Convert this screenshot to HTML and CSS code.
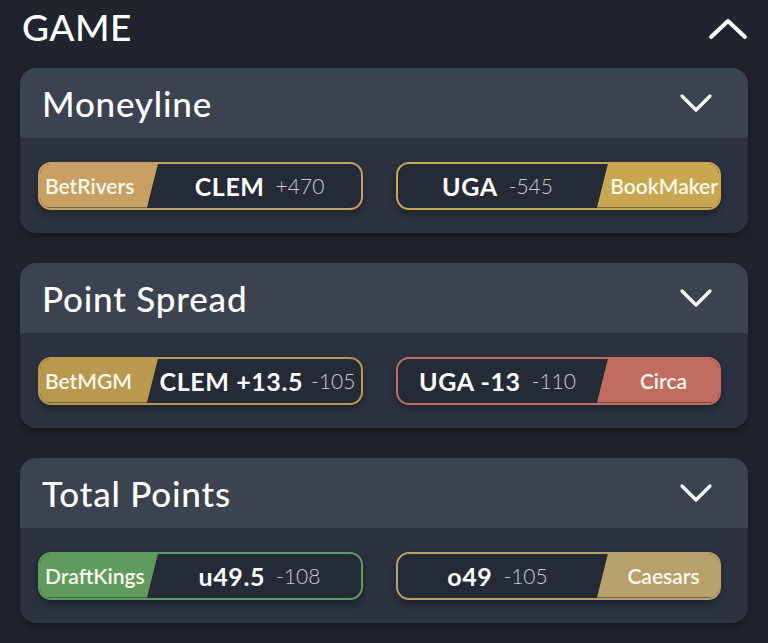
FILE: index.html
```html
<!DOCTYPE html>
<html lang="en">
<head>
    <meta charset="UTF-8">
    <meta name="viewport" content="width=device-width, initial-scale=1.0">
    <title>Game Odds</title>

    <link rel="stylesheet" href="styles.css">
</head>
<body>

    <div class="section-head">
        <h1>GAME</h1>
        <svg class="chevron-up" width="40" height="22" viewBox="0 0 40 22">
            <path d="M3 19 L20 3 L37 19" fill="none" stroke="#fff" stroke-width="4" stroke-linecap="round" stroke-linejoin="round"/>
        </svg>
    </div>

    <div class="market">
        <div class="market-head">
            <h2>Moneyline</h2>
            <svg class="chevron" width="34" height="20" viewBox="0 0 34 20">
                <path d="M3 3 L17 17 L31 3" fill="none" stroke="#fff" stroke-width="3.2" stroke-linecap="round" stroke-linejoin="round"/>
            </svg>
        </div>
        <div class="market-body">
            <div class="pill left betrivers">
                <span class="book">BetRivers</span>
                <span class="line"><b>CLEM</b> <span class="odds">+470</span></span>
            </div>
            <div class="pill right bookmaker">
                <span class="line"><b>UGA</b> <span class="odds">-545</span></span>
                <span class="book">BookMaker</span>
            </div>
        </div>
    </div>

    <div class="market">
        <div class="market-head">
            <h2>Point Spread</h2>
            <svg class="chevron" width="34" height="20" viewBox="0 0 34 20">
                <path d="M3 3 L17 17 L31 3" fill="none" stroke="#fff" stroke-width="3.2" stroke-linecap="round" stroke-linejoin="round"/>
            </svg>
        </div>
        <div class="market-body">
            <div class="pill left betmgm">
                <span class="book">BetMGM</span>
                <span class="line tight"><b>CLEM +13.5</b> <span class="odds">-105</span></span>
            </div>
            <div class="pill right circa">
                <span class="line"><b>UGA -13</b> <span class="odds">-110</span></span>
                <span class="book">Circa</span>
            </div>
        </div>
    </div>

    <div class="market">
        <div class="market-head">
            <h2>Total Points</h2>
            <svg class="chevron" width="34" height="20" viewBox="0 0 34 20">
                <path d="M3 3 L17 17 L31 3" fill="none" stroke="#fff" stroke-width="3.2" stroke-linecap="round" stroke-linejoin="round"/>
            </svg>
        </div>
        <div class="market-body">
            <div class="pill left draftkings">
                <span class="book">DraftKings</span>
                <span class="line"><b>u49.5</b> <span class="odds">-108</span></span>
            </div>
            <div class="pill right caesars">
                <span class="line"><b>o49</b> <span class="odds">-105</span></span>
                <span class="book">Caesars</span>
            </div>
        </div>
    </div>

</body>
</html>
```

FILE: styles.css
```css
body {
    font-family: Lato, "Open Sans", sans-serif;
    background-color: #21242e;
    color: #fff;
    margin: 0;
    padding: 0 20px;
}

.section-head {
    display: flex;
    align-items: center;
    justify-content: space-between;
    height: 52px;
    margin-bottom: 16px;
    padding-left: 2px;
}

.section-head h1 {
    margin: 0;
    font-size: 37px;
    font-weight: 500;
    letter-spacing: 0.5px;
}

.chevron-up {
    margin-top: 6px;
}

.market {
    border-radius: 16px;
    overflow: hidden;
    margin-bottom: 30px;
    box-shadow: 0 4px 10px rgba(0, 0, 0, 0.35);
}

.market-head {
    background-color: #3b4250;
    height: 70px;
    display: flex;
    align-items: center;
    justify-content: space-between;
    padding: 0 35px 0 22px;
}

.market-head h2 {
    margin: 0;
    font-size: 35px;
    font-weight: 500;
    letter-spacing: 0.8px;
}

.market-body {
    background-color: #2c3240;
    height: 95px;
    display: grid;
    grid-template-columns: 325px 325px;
    column-gap: 33px;
    align-items: center;
    padding: 0 0 0 18px;
}

.pill {
    height: 48px;
    box-sizing: border-box;
    border: 2px solid;
    border-radius: 13px;
    overflow: hidden;
    display: flex;
    background-color: #252a37;
    box-shadow: 0 4px 8px rgba(0, 0, 0, 0.35);
}

.book {
    width: 118px;
    flex: none;
    display: flex;
    align-items: center;
    font-size: 21px;
    font-weight: 600;
    color: #fdf8ee;
    box-sizing: border-box;
}

.left .book {
    clip-path: polygon(0 0, 100% 0, calc(100% - 11px) 100%, 0 100%);
    padding-left: 5px;
}

.right .book {
    width: 122px;
    clip-path: polygon(11px 0, 100% 0, 100% 100%, 0 100%);
    justify-content: flex-end;
    padding-right: 1px;
}

.circa .book,
.caesars .book {
    justify-content: center;
    padding-left: 12px;
}

.line {
    flex: 1;
    display: flex;
    align-items: center;
    justify-content: center;
    gap: 11px;
    font-size: 21px;
}

.line.tight {
    gap: 8px;
    padding-right: 4px;
}

.line b {
    font-size: 25px;
    font-weight: 700;
    letter-spacing: 0.6px;
}

.odds {
    color: #c9cdd8;
    font-weight: 300;
}

.betrivers { border-color: #c8a063; }
.betrivers .book { background-color: #c8a063; }

.bookmaker { border-color: #c9a750; }
.bookmaker .book { background-color: #c9a750; }

.betmgm { border-color: #b8994e; }
.betmgm .book { background-color: #b8994e; }

.circa { border-color: #c06c60; }
.circa .book { background-color: #c06c60; }

.draftkings { border-color: #5e9b5d; }
.draftkings .book { background-color: #5e9b5d; }

.caesars { border-color: #b9a16d; }
.caesars .book { background-color: #b9a16d; }
```
